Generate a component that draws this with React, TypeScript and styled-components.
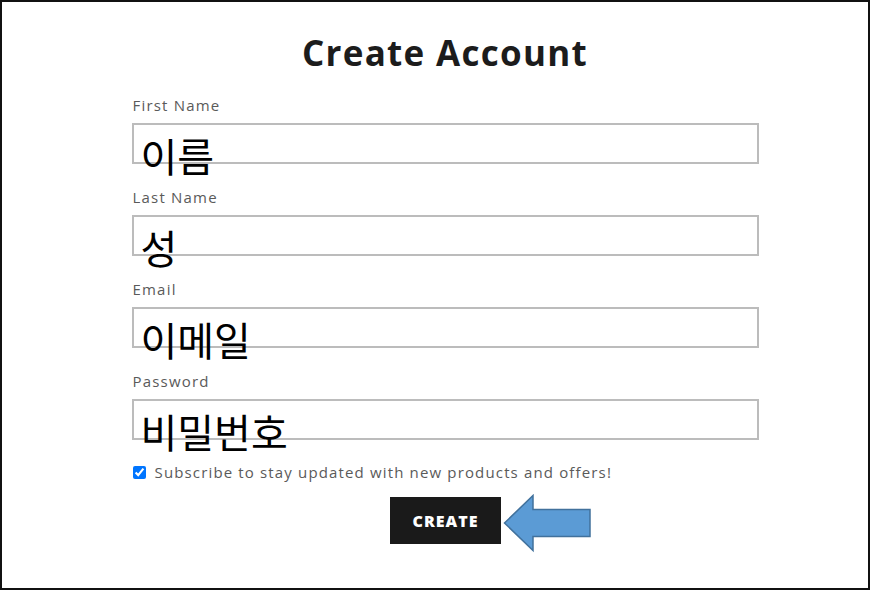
import React from 'react';
import styled, { createGlobalStyle } from 'styled-components';

const GlobalStyle = createGlobalStyle`
  html, body {
    margin: 0;
    padding: 0;
    background: #ffffff;
  }
  * {
    box-sizing: border-box;
  }
`;

const Frame = styled.div`
  width: 870px;
  height: 590px;
  border: 2px solid #111111;
  padding: 31px 0 0 20px;
  display: flex;
  flex-direction: column;
  align-items: center;
  font-family: "Open Sans", "Liberation Sans", sans-serif;
`;

const Title = styled.h1`
  margin: 0 0 22px;
  font-size: 35px;
  line-height: 40px;
  font-weight: 700;
  letter-spacing: 1.3px;
  color: #1c1c1c;
`;

const Form = styled.form`
  width: 627px;
  display: flex;
  flex-direction: column;
`;

const Label = styled.label`
  display: block;
  font-size: 15px;
  line-height: 20px;
  letter-spacing: 1.2px;
  color: #5a5a5a;
  margin: 0 0 8px 1px;
`;

const Box = styled.div`
  height: 41px;
  border: 2px solid #bcbcbc;
  margin-bottom: 23px;
  padding-left: 7px;
  overflow: visible;
`;

const BoxText = styled.span`
  display: block;
  font-family: "Noto Sans CJK KR", "Noto Sans", sans-serif;
  font-size: 40px;
  line-height: 40px;
  color: #000000;
  margin-top: 10px;
  white-space: nowrap;
`;

const CheckRow = styled.div`
  display: flex;
  align-items: center;
  gap: 9px;
  height: 20px;
  margin: -1px 0 0 1px;
  font-size: 15px;
  letter-spacing: 1.15px;
  color: #5a5a5a;
`;

const Check = styled.input`
  width: 13px;
  height: 13px;
  margin: 0;
`;

const ButtonRow = styled.div`
  display: flex;
  justify-content: center;
  margin-top: 15px;
`;

const ButtonWrap = styled.div`
  position: relative;
`;

const CreateButton = styled.button`
  width: 111px;
  height: 47px;
  border: none;
  background: #1a1a1a;
  color: #ffffff;
  font-family: "Open Sans", "Liberation Sans", sans-serif;
  font-weight: 800;
  font-size: 16px;
  letter-spacing: 1px;
  padding: 0 0 0 1px;
`;

const Arrow = styled.svg`
  position: absolute;
  left: 113px;
  top: -3px;
`;

const fields = [
  { label: 'First Name', value: '이름' },
  { label: 'Last Name', value: '성' },
  { label: 'Email', value: '이메일' },
  { label: 'Password', value: '비밀번호' },
];

export default function App() {
  return (
    <>
      <GlobalStyle />
      <Frame>
        <Title>Create Account</Title>
        <Form onSubmit={(e) => e.preventDefault()}>
          {fields.map((f) => (
            <div key={f.label}>
              <Label>{f.label}</Label>
              <Box>
                <BoxText>{f.value}</BoxText>
              </Box>
            </div>
          ))}
          <CheckRow>
            <Check type="checkbox" defaultChecked />
            <span>Subscribe to stay updated with new products and offers!</span>
          </CheckRow>
          <ButtonRow>
            <ButtonWrap>
              <CreateButton type="submit">CREATE</CreateButton>
              <Arrow width="89" height="59" viewBox="0 0 89 59">
                <path
                  d="M1.5 29 L30 1.5 L30 15.5 L87 15.5 L87 42.5 L30 42.5 L30 56.5 Z"
                  fill="#5b9bd5"
                  stroke="#41719c"
                  strokeWidth="1.5"
                  strokeLinejoin="miter"
                />
              </Arrow>
            </ButtonWrap>
          </ButtonRow>
        </Form>
      </Frame>
    </>
  );
}
